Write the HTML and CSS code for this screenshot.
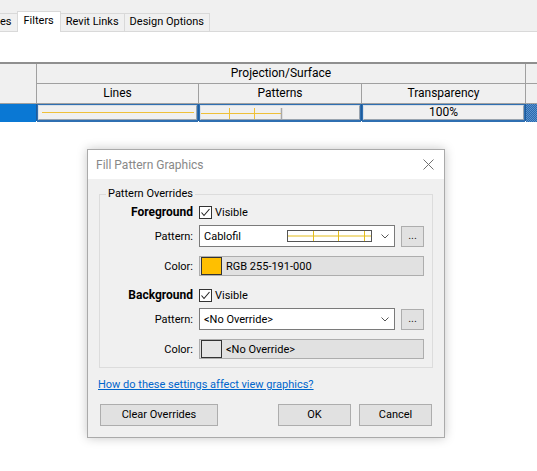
FILE: index.html
```html
<!DOCTYPE html>
<html>
<head>
<meta charset="utf-8">
<link rel="stylesheet" href="styles.css">
</head>
<body>
<div class="tabs">
  <div class="tab cut">es</div>
  <div class="tab active">Filters</div>
  <div class="tab">Revit Links</div>
  <div class="tab">Design Options</div>
</div>

<div class="head">
  <div class="hc c0"></div>
  <div class="hc span3">Projection/Surface</div>
  <div class="hc"></div>
  <div class="hc">Lines</div>
  <div class="hc">Patterns</div>
  <div class="hc">Transparency</div>
  <div class="hc"></div>
</div>
<div class="row">
  <div class="dc sel"></div>
  <div class="dc"><div class="box"><div class="yline"></div></div></div>
  <div class="dc"><div class="box">
    <svg class="patprev" width="82" height="12" viewBox="0 0 82 12">
      <line x1="0" y1="6.5" x2="80" y2="6.5" stroke="#efc038" stroke-width="1"/>
      <line x1="28.5" y1="1" x2="28.5" y2="12" stroke="#efc038" stroke-width="1"/>
      <line x1="53.5" y1="1" x2="53.5" y2="12" stroke="#efc038" stroke-width="1"/>
      <line x1="80.5" y1="1" x2="80.5" y2="12" stroke="#a8a8a8" stroke-width="1.5"/>
    </svg>
  </div></div>
  <div class="dc"><div class="box center">100%</div></div>
  <div class="dc dither"></div>
</div>

<div class="dialog">
  <div class="titlebar">
    <span>Fill Pattern Graphics</span>
    <svg width="11" height="11" viewBox="0 0 11 11"><path d="M0.5 0.5 L10.5 10.5 M10.5 0.5 L0.5 10.5" stroke="#707070" stroke-width="1" fill="none"/></svg>
  </div>
  <div class="dbody">
    <fieldset class="group">
      <legend>Pattern Overrides</legend>
      <div class="frow r-head">
        <span class="lbl b">Foreground</span>
        <svg class="chk" width="13" height="13" viewBox="0 0 13 13"><rect x="0.5" y="0.5" width="12" height="12" fill="#fff" stroke="#333"/><path d="M2.5 6.5 L5 9.5 L10.5 3" stroke="#222" stroke-width="1.1" fill="none"/></svg>
        <span class="vis">Visible</span>
      </div>
      <div class="frow r-pat">
        <span class="lbl">Pattern:</span>
        <div class="select">
          <span class="txt">Cablofil</span>
          <svg class="prev" width="85" height="12" viewBox="0 0 85 12">
            <rect x="0.5" y="0.5" width="84" height="11" fill="#fff" stroke="#555"/>
            <line x1="1" y1="6" x2="84" y2="6" stroke="#e3bc1c"/>
            <line x1="26.5" y1="1" x2="26.5" y2="11" stroke="#e3bc1c"/>
            <line x1="51.5" y1="1" x2="51.5" y2="11" stroke="#e3bc1c"/>
            <line x1="77.5" y1="1" x2="77.5" y2="11" stroke="#e3bc1c"/>
          </svg>
          <svg class="chev" width="8" height="5" viewBox="0 0 8 5"><polyline points="0.5,0.5 4,4 7.5,0.5" fill="none" stroke="#555"/></svg>
        </div>
        <div class="dots">...</div>
      </div>
      <div class="frow r-col">
        <span class="lbl">Color:</span>
        <div class="colorf"><div class="sw orange"></div><span>RGB 255-191-000</span></div>
      </div>

      <div class="frow r-head second">
        <span class="lbl b">Background</span>
        <svg class="chk" width="13" height="13" viewBox="0 0 13 13"><rect x="0.5" y="0.5" width="12" height="12" fill="#fff" stroke="#333"/><path d="M2.5 6.5 L5 9.5 L10.5 3" stroke="#222" stroke-width="1.1" fill="none"/></svg>
        <span class="vis">Visible</span>
      </div>
      <div class="frow r-pat">
        <span class="lbl">Pattern:</span>
        <div class="select">
          <span class="txt">&lt;No Override&gt;</span>
          <svg class="chev" width="8" height="5" viewBox="0 0 8 5"><polyline points="0.5,0.5 4,4 7.5,0.5" fill="none" stroke="#555"/></svg>
        </div>
        <div class="dots">...</div>
      </div>
      <div class="frow r-col">
        <span class="lbl">Color:</span>
        <div class="colorf"><div class="sw gray"></div><span>&lt;No Override&gt;</span></div>
      </div>
    </fieldset>
    <a class="link">How do these settings affect view graphics?</a>
    <div class="btns">
      <div class="btn wide">Clear Overrides</div>
      <div class="spacer"></div>
      <div class="btn std">OK</div>
      <div class="btn std">Cancel</div>
    </div>
  </div>
</div>
</body>
</html>
```

FILE: styles.css
```css
* { box-sizing: border-box; }
html, body { margin: 0; padding: 0; }
body {
  width: 537px;
  height: 471px;
  background: #fff;
  font-family: Roboto, "Noto Sans", sans-serif;
  font-size: 11px;
  color: #000;
  position: relative;
  overflow: hidden;
}

/* tabs */
.tabs {
  display: flex;
  align-items: flex-end;
  height: 32px;
  background: #f0f0f0;
  border-bottom: 1px solid #d9d9d9;
}
.tab {
  height: 18px;
  line-height: 16px;
  padding: 0 5px;
  border: 1px solid #d9d9d9;
  border-bottom: none;
  margin-left: -1px;
  background: #f0f0f0;
  white-space: nowrap;
}
.tab.cut { margin-left: 0; padding-left: 0; border-left: none; }
.tab.active {
  height: 21px;
  line-height: 18px;
  background: #fff;
  margin-bottom: -1px;
  padding: 0 6px;
  position: relative;
}

/* table header */
.head {
  display: grid;
  grid-template-columns: 36px 161px 162px 163px 11px;
  grid-template-rows: 19px 19px;
  gap: 1px;
  background: #a0a0a0;
  border-top: 2px solid #8f8f8f;
  border-bottom: 1px solid #a0a0a0;
  margin-top: 30px;
  font-size: 12px;
}
.hc {
  background: #f0f0f0;
  text-align: center;
  line-height: 19px;
}
.hc.c0 { grid-row: 1 / 3; }
.hc.span3 { grid-column: 2 / 5; }

/* data row */
.row {
  display: grid;
  grid-template-columns: 36px 161px 162px 163px 11px;
  column-gap: 1px;
  height: 17px;
  background: #1d5c9c;
  font-size: 12px;
}
.dc { padding: 1px 1px 2px; background: #2f6fb1; }
.dc.sel { background: #0a78d4; padding: 0; }
.dc.dither {
  padding: 0;
  background: repeating-conic-gradient(#2a6ab0 0 25%, #5b93cc 0 50%) 0 0 / 2px 2px;
}
.box {
  height: 100%;
  background: #f0f0f0;
  border: 1px solid #9aa4ae;
  border-top-color: #d8e0e8;
  border-left-color: #d8e0e8;
  display: flex;
  align-items: center;
  line-height: 13px;
}
.box.center { justify-content: center; }
.yline { flex: 1; height: 1px; background: #efc038; margin: 0 2px 0 3px; }
.patprev { margin-left: 0; display: block; }

/* dialog */
.dialog {
  position: absolute;
  left: 87px;
  top: 149px;
  width: 358px;
  height: 289px;
  border: 1px solid #aaaaaa;
  background: #f0f0f0;
  box-shadow: 0 0 10px rgba(0, 0, 0, 0.22);
}
.titlebar {
  height: 29px;
  background: #fff;
  display: flex;
  align-items: center;
  justify-content: space-between;
  padding: 0 10px 0 8px;
  font-size: 12px;
  color: #888;
}
.titlebar svg { display: block; }
.dbody { padding: 8px 11px 0; }

.group {
  margin: 0;
  padding: 2px 9px 8px 0;
  border: 1px solid #dcdcdc;
  min-width: 0;
}
.group legend {
  margin-left: 6px;
  padding: 0 2px;
  line-height: 14px;
}

.frow { display: flex; align-items: center; }
.lbl {
  width: 93px;
  flex: none;
  text-align: right;
  margin-right: 6px;
}
.lbl.b { font-weight: bold; font-size: 12px; }
.r-head { height: 18px; }
.r-head.second { margin-top: 10px; }
.r-pat { height: 22px; margin-top: 4px; }
.r-col { height: 20px; margin-top: 9px; }
.chk { display: block; flex: none; }
.vis { margin-left: 3px; }

.select {
  width: 196px;
  height: 22px;
  background: #fff;
  border: 1px solid #7a7a7a;
  display: flex;
  align-items: center;
  padding-left: 4px;
  flex: none;
}
.select .txt { flex: 1; white-space: nowrap; }
.prev { display: block; flex: none; }
.chev { display: block; flex: none; margin-left: 9px; margin-right: 5px; }
.dots {
  width: 23px;
  height: 21px;
  margin-left: 6px;
  background: #e1e1e1;
  border: 1px solid #adadad;
  text-align: center;
  line-height: 17px;
  color: #222;
  flex: none;
}

.colorf {
  width: 225px;
  height: 20px;
  background: #e1e1e1;
  border: 1px solid #adadad;
  display: flex;
  align-items: center;
  padding-left: 1px;
  flex: none;
}
.sw { width: 21px; height: 18px; border: 1px solid #333; flex: none; }
.sw.orange { background: #ffbf00; }
.sw.gray { background: #e6e6e6; }
.colorf span { margin-left: 4px; }

.link {
  display: block;
  margin: 10px 0 0 -1px;
  line-height: 14px;
  color: #0066cc;
  text-decoration: underline;
}

.btns { display: flex; margin-top: 12px; padding: 0 1px; }
.btn {
  height: 22px;
  background: #e1e1e1;
  border: 1px solid #adadad;
  text-align: center;
  line-height: 20px;
}
.btn.wide { width: 118px; }
.btn.std { width: 73px; }
.btn.std + .btn.std { margin-left: 8px; }
.spacer { flex: 1; }
```
